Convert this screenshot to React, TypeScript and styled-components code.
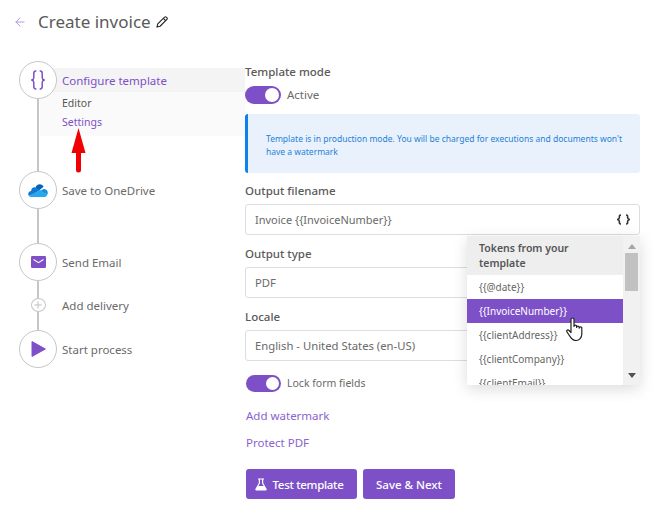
import React from "react";
import styled, { createGlobalStyle } from "styled-components";
import { ArrowLeft } from "lucide-react";

const Global = createGlobalStyle`
  html, body { margin: 0; padding: 0; background: #fff; }
  body { font-family: "Noto Sans", "Open Sans", sans-serif; color: #555; }
  * { box-sizing: border-box; }
`;

const Page = styled.div`
  position: relative;
  width: 656px;
  height: 528px;
  overflow: hidden;
  padding: 9px 16px 0 14px;
`;
const Header = styled.header`
  display: flex;
  align-items: center;
  height: 25px;
`;
const Back = styled.span`
  display: flex;
  width: 24px;
  margin-left: -1px;
  margin-right: 1px;
  color: #a98be0;
`;
const Title = styled.h1`
  margin: 0 5px 0 0;
  font-size: 17px;
  line-height: 25px;
  font-weight: 400;
  color: #5a5a5a;
`;
const Body = styled.div`
  display: flex;
  margin-top: 27px;
`;
const Side = styled.nav`
  width: 231px;
  padding-left: 5px;
  display: flex;
  flex-direction: column;
`;
const Step = styled.div`
  display: flex;
`;
const Rail = styled.div`
  width: 38px;
  flex: none;
  display: flex;
  flex-direction: column;
  align-items: center;
`;
const Circle = styled.div`
  position: relative;
  z-index: 1;
  width: 38px;
  height: 38px;
  flex: none;
  border: 1.5px solid #c6c6c6;
  border-radius: 50%;
  background: #fff;
  display: flex;
  align-items: center;
  justify-content: center;
`;
const SmallCircle = styled.div`
  width: 15px;
  height: 14px;
  flex: none;
  border: 1.5px solid #c6c6c6;
  border-radius: 50%;
  display: flex;
  align-items: center;
  justify-content: center;
`;
const Line = styled.div<{ $h: number }>`
  width: 1.5px;
  height: ${(p) => p.$h}px;
  background: #c6c6c6;
  flex: none;
`;
const StepLabel = styled.div`
  margin-left: 5px;
  padding-top: 1px;
  font-size: 11.5px;
  line-height: 38px;
  color: #6a6a6a;
`;
const SmallLabel = styled(StepLabel)`
  line-height: 14px;
`;
const Panel = styled.div`
  flex: 1;
  margin: 7px 0 0 -17px;
  height: 68px;
  background: #fafafa;
`;
const PanelHead = styled.div`
  height: 24px;
  padding: 1px 0 0 22px;
  background: #f4f4f4;
  font-size: 11.5px;
  line-height: 24px;
  color: #7e50c8;
`;
const SubItem = styled.div<{ $active?: boolean }>`
  padding-left: 22px;
  font-size: 10.5px;
  line-height: 19px;
  color: ${(p) => (p.$active ? "#7e50c8" : "#555")};
  &:nth-child(2) { margin-top: 2px; }
`;
const Main = styled.main`
  width: 395px;
  display: flex;
  flex-direction: column;
  margin-top: 3px;
`;
const Label = styled.label`
  display: block;
  font-size: 11.5px;
  line-height: 16px;
  font-weight: 500;
  color: #5a5a5a;
`;
const SwitchRow = styled.div<{ $small?: boolean }>`
  display: flex;
  align-items: center;
  gap: 6px;
  margin: ${(p) => (p.$small ? "1px 0 0 1px" : "4px 0 0")};
  line-height: 20px;
  font-size: ${(p) => (p.$small ? "10.5px" : "11.5px")};
  color: #6a6a6a;
`;
const SwitchText = styled.span`
  padding-top: 1px;
`;
const Switch = styled.span<{ $small?: boolean }>`
  display: flex;
  justify-content: flex-end;
  align-items: center;
  width: ${(p) => (p.$small ? 35 : 36)}px;
  height: ${(p) => (p.$small ? 17 : 18)}px;
  padding-right: 2px;
  border-radius: 9px;
  background: #7e50c8;
  &::after {
    content: "";
    width: ${(p) => (p.$small ? 13 : 14)}px;
    height: ${(p) => (p.$small ? 13 : 14)}px;
    border-radius: 50%;
    background: #fff;
  }
`;
const Alert = styled.div`
  height: 59px;
  margin: 9px 0 10px;
  padding: 18px 10px 0 18px;
  background: #e9f2fc;
  border-left: 3px solid #0f80f0;
  border-radius: 3px;
  font-size: 8.5px;
  line-height: 13px;
  color: #1f7fd8;
`;
const Field = styled.div<{ $size?: number }>`
  height: 31px;
  margin: 5px 0 11px;
  display: flex;
  align-items: center;
  justify-content: space-between;
  padding: 0 8px 0 9px;
  border: 1px solid #ddd;
  border-radius: 3px;
  font-size: ${(p) => p.$size ?? 11.3}px;
  color: #6a6a6a;
`;
const TextLink = styled.a<{ $gap: number }>`
  display: block;
  margin: ${(p) => p.$gap}px 0 0 1px;
  font-size: 11.5px;
  line-height: 16px;
  color: #8a62d0;
`;
const Buttons = styled.div`
  display: flex;
  gap: 6px;
  margin: 18px 0 0 1px;
`;
const Button = styled.button<{ $w: number; $tight?: boolean }>`
  display: flex;
  align-items: center;
  justify-content: center;
  gap: 5px;
  height: 30px;
  padding: ${(p) => (p.$tight ? "0 4px 0 0" : "0")};
  width: ${(p) => p.$w}px;
  border: 0;
  border-radius: 3px;
  background: #7e50c8;
  color: #fff;
  font: 500 11.5px "Noto Sans", sans-serif;
  letter-spacing: ${(p) => (p.$tight ? "-0.3px" : "0")};
`;
const Dropdown = styled.div`
  position: absolute;
  left: 467px;
  top: 236px;
  width: 173px;
  height: 149px;
  display: flex;
  background: #fff;
  box-shadow: 0 4px 14px rgba(0, 0, 0, 0.14);
  overflow: hidden;
`;
const List = styled.div`
  width: 156px;
`;
const ListHead = styled.div`
  height: 39px;
  padding: 5px 12px 0;
  background: #eee;
  font-size: 10.5px;
  line-height: 15px;
  font-weight: 600;
  color: #555;
`;
const Item = styled.div<{ $on?: boolean }>`
  height: 24px;
  padding-left: 12px;
  font-size: 10px;
  line-height: 24px;
  color: ${(p) => (p.$on ? "#fff" : "#666")};
  background: ${(p) => (p.$on ? "#7e50c8" : "#fff")};
`;
const Scroll = styled.div`
  flex: 1;
  background: #f1f1f1;
  display: flex;
  flex-direction: column;
  align-items: center;
  padding-top: 8px;
`;
const ArrowUp = styled.div`
  width: 0;
  height: 0;
  border: 4px solid transparent;
  border-top: 0;
  border-bottom: 5px solid #a5a5a5;
`;
const ArrowDown = styled.div`
  width: 0;
  height: 0;
  margin-top: 82px;
  border: 4px solid transparent;
  border-bottom: 0;
  border-top: 5px solid #505050;
`;
const Thumb = styled.div`
  width: 13px;
  height: 38px;
  margin-top: 4px;
  background: #c1c1c1;
`;
const RedArrow = styled.svg`
  position: absolute;
  left: 71px;
  top: 128px;
`;
const Cursor = styled.svg`
  position: absolute;
  left: 566px;
  top: 317px;
`;

const Braces = () => (
  <svg width="14" height="20" viewBox="0 0 14 20" fill="none" stroke="#7e50c8" strokeWidth="1.5" strokeLinecap="round">
    <path d="M4.8 1C3 1 2.8 2 2.8 3.4v4C2.8 8.8 2.2 9.6.8 10c1.4.4 2 1.2 2 2.6v4C2.8 18 3 19 4.8 19" />
    <path d="M9.2 1C11 1 11.2 2 11.2 3.4v4c0 1.4.6 2.2 2 2.6-1.4.4-2 1.2-2 2.6v4c0 1.4-.2 2.4-2 2.4" />
  </svg>
);
const OneDrive = () => (
  <svg width="20" height="13" viewBox="0 0 20 13">
    <path d="M7.5 3.4C8.3 1.3 10 .2 11.8.2c1.7 0 3.1 1 3.8 2.6L11 6.4 7.5 3.4z" fill="#0364b8" />
    <path d="M7.5 3.4C5 3 3 4.8 3.2 7 1.4 7.2.2 8.4.2 10c0 .8.3 1.5.8 2l8-4 3-2-4.5-2.6z" fill="#0f78d4" />
    <path d="M15.6 5c2.3-.1 4.2 1.3 4.2 3.7 0 .7-.2 1.3-.5 1.8L12 7l3.6-2z" fill="#1490df" />
    <path d="M1 12c.4.5 1.2 1 2.3 1h13.5c1.1 0 2-.9 2.5-2.5l-7.3-4.4L1 12z" fill="#28a8ea" />
  </svg>
);
const Mail = () => (
  <svg width="15" height="12" viewBox="0 0 15 12">
    <rect width="15" height="12" rx="1.2" fill="#7e50c8" />
    <path d="M2.5 3.5l5 3.2 5-3.2" fill="none" stroke="#fff" strokeWidth="1.1" />
  </svg>
);
const Play = () => (
  <svg width="15" height="16" viewBox="0 0 15 16">
    <path d="M1 .6L14.4 8 1 15.4z" fill="#7e50c8" stroke="#7e50c8" strokeWidth="1" strokeLinejoin="round" />
  </svg>
);
const Plus = () => (
  <svg width="8" height="8" viewBox="0 0 8 8">
    <path d="M4 .5v7M.5 4h7" stroke="#d0d0d0" strokeWidth="1.4" />
  </svg>
);
const CodeIcon = () => (
  <svg width="15" height="11" viewBox="0 0 15 11" fill="none" stroke="#333" strokeWidth="1.6">
    <path d="M5 1C3 1 3.4 2.4 3.4 3.5 3.4 4.5 2.8 5.2 1.2 5.5 2.8 5.8 3.4 6.5 3.4 7.5 3.4 8.6 3 10 5 10" />
    <path d="M10 1c2 0 1.6 1.4 1.6 2.5 0 1 .6 1.7 2.2 2-1.6.3-2.2 1-2.2 2 0 1.1.4 2.5-1.6 2.5" />
  </svg>
);
const Flask = () => (
  <svg width="12" height="13" viewBox="0 0 12 13">
    <path d="M3 .5h6v1H8.2v3.4l3.4 6.2c.4.8-.1 1.4-.9 1.4H1.3c-.8 0-1.3-.6-.9-1.4l3.4-6.2V1.5H3z" fill="#fff" />
    <path d="M5 1.5v3.7L3.4 8h5.2L7 5.2V1.5z" fill="#7e50c8" />
  </svg>
);
const PencilIcon = () => (
  <svg width="12" height="12" viewBox="0 0 13 13" fill="none" stroke="#222" strokeWidth="1.2" strokeLinejoin="round">
    <path d="M9.3 1.2a1.3 1.3 0 0 1 1.9 0l.6.6a1.3 1.3 0 0 1 0 1.9L4.4 11.1 1 12l.9-3.4z" />
    <path d="M8 2.6l2.4 2.4" />
  </svg>
);

export default function App() {
  return (
    <Page>
      <Global />
      <Header>
        <Back><ArrowLeft size={14} strokeWidth={1.5} /></Back>
        <Title>Create invoice</Title>
        <PencilIcon />
      </Header>
      <Body>
        <Side>
          <Step>
            <Rail>
              <Circle><Braces /></Circle>
              <Line $h={72} />
            </Rail>
            <Panel>
              <PanelHead>Configure template</PanelHead>
              <SubItem>Editor</SubItem>
              <SubItem $active>Settings</SubItem>
            </Panel>
          </Step>
          <Step>
            <Rail>
              <Circle><OneDrive /></Circle>
              <Line $h={34} />
            </Rail>
            <StepLabel>Save to OneDrive</StepLabel>
          </Step>
          <Step>
            <Rail>
              <Circle><Mail /></Circle>
              <Line $h={17} />
            </Rail>
            <StepLabel>Send Email</StepLabel>
          </Step>
          <Step>
            <Rail>
              <SmallCircle><Plus /></SmallCircle>
              <Line $h={18} />
            </Rail>
            <SmallLabel>Add delivery</SmallLabel>
          </Step>
          <Step>
            <Rail>
              <Circle><Play /></Circle>
            </Rail>
            <StepLabel>Start process</StepLabel>
          </Step>
        </Side>
        <Main>
          <Label>Template mode</Label>
          <SwitchRow>
            <Switch />
            <SwitchText>Active</SwitchText>
          </SwitchRow>
          <Alert>
            Template is in production mode. You will be charged for executions and documents won't have a watermark
          </Alert>
          <Label>Output filename</Label>
          <Field $size={11}>
            Invoice {"{{InvoiceNumber}}"}
            <CodeIcon />
          </Field>
          <Label>Output type</Label>
          <Field>PDF</Field>
          <Label>Locale</Label>
          <Field>English - United States (en-US)</Field>
          <SwitchRow $small>
            <Switch $small />
            Lock form fields
          </SwitchRow>
          <TextLink $gap={15}>Add watermark</TextLink>
          <TextLink $gap={11}>Protect PDF</TextLink>
          <Buttons>
            <Button $w={111} $tight><Flask />Test template</Button>
            <Button $w={92}>Save &amp; Next</Button>
          </Buttons>
        </Main>
      </Body>
      <Dropdown>
        <List>
          <ListHead>Tokens from your template</ListHead>
          <Item>{"{{@date}}"}</Item>
          <Item $on>{"{{InvoiceNumber}}"}</Item>
          <Item>{"{{clientAddress}}"}</Item>
          <Item>{"{{clientCompany}}"}</Item>
          <Item>{"{{clientEmail}}"}</Item>
        </List>
        <Scroll>
          <ArrowUp />
          <Thumb />
          <ArrowDown />
        </Scroll>
      </Dropdown>
      <RedArrow width="15" height="45" viewBox="0 0 15 45">
        <path d="M7.5 0L14.5 25H10V42a2.5 2.5 0 0 1-5 0V25H.5z" fill="#f00000" />
      </RedArrow>
      <Cursor width="19" height="25" viewBox="0 0 19 25" fill="#fff" stroke="#222" strokeWidth="1.2" strokeLinejoin="round">
        <path d="M5 15.5V2.5a1.5 1.5 0 0 1 3 0v7a1.3 1.3 0 0 1 2.6 0v1a1.3 1.3 0 0 1 2.6 0v.7a1.3 1.3 0 0 1 2.6 0V17c0 3.5-2.5 6.5-5.5 6.5s-4.5-1.4-6-3.7L1 15c-.8-1.2.2-2.6 1.5-2z" />
      </Cursor>
    </Page>
  );
}
